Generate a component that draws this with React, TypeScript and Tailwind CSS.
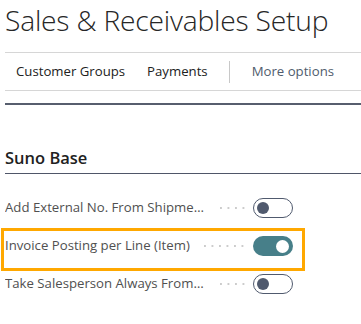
import React from "react";

function Toggle({ on }: { on: boolean }) {
  if (on) {
    return (
      <div className="w-[40px] h-[20px] rounded-full bg-[#477f89] flex items-center justify-end pr-[4px] shrink-0">
        <div className="w-[13px] h-[13px] rounded-full bg-white" />
      </div>
    );
  }
  return (
    <div className="w-[40px] h-[20px] rounded-full border-[1.5px] border-[#505a6e] bg-white flex items-center pl-[3px] shrink-0">
      <div className="w-[12px] h-[12px] rounded-full bg-[#505a6e]" />
    </div>
  );
}

function Row({ label, on, highlight }: { label: string; on: boolean; highlight?: boolean }) {
  return (
    <div className="relative h-[38px] w-[293px] pl-[5px] flex items-center">
      <div className="truncate max-w-[201px] text-[13.2px] text-[#505050]">{label}</div>
      <div className="flex-1 ml-[14px] mr-[8px] h-[2px] bg-[linear-gradient(to_right,#cccccc_2px,transparent_2px)] bg-[length:7.5px_2px] bg-repeat-x" />
      <Toggle on={on} />
      {highlight && (
        <div className="absolute left-[1px] top-[1px] w-[304px] h-[43px] border-[3px] border-[#ffa800] pointer-events-none" />
      )}
    </div>
  );
}

export default function App() {
  return (
    <div
      className="w-[361px] h-[324px] bg-white overflow-hidden"
      style={{ fontFamily: '"Open Sans", "Noto Sans", sans-serif' }}
    >
      <div className="h-[52px] pl-[5px]">
        <div className="text-[28.2px] leading-[40px] font-light text-[#262626] whitespace-nowrap tracking-[-0.2px]">
          Sales &amp; Receivables Setup
        </div>
      </div>
      <div className="ml-[5px] border-t border-[#d6d6d6]" />
      <div className="ml-[5px] h-[38px] border-b border-[#d6d6d6] flex items-center text-[13.2px] text-[#212121] pl-[11px]">
        <span>Customer Groups</span>
        <span className="ml-[22px]">Payments</span>
        <div className="ml-[21px] w-px h-[22px] bg-[#c8c8c8]" />
        <span className="ml-[22px] text-[#505c6d]">More options</span>
      </div>
      <div className="h-[12px]" />
      <div className="ml-[5px] h-[2px] bg-[#575e6e]" />
      <div className="h-[42px]" />
      <div className="ml-[5px] pb-[4px] border-b-[1.5px] border-[#4f5668]">
        <div className="text-[16.5px] leading-[22px] font-semibold text-[#212121]">Suno Base</div>
      </div>
      <div className="h-[15px]" />
      <Row label="Add External No. From Shipment" on={false} />
      <Row label="Invoice Posting per Line (Item)" on={true} highlight />
      <Row label="Take Salesperson Always From Customer" on={false} />
    </div>
  );
}
